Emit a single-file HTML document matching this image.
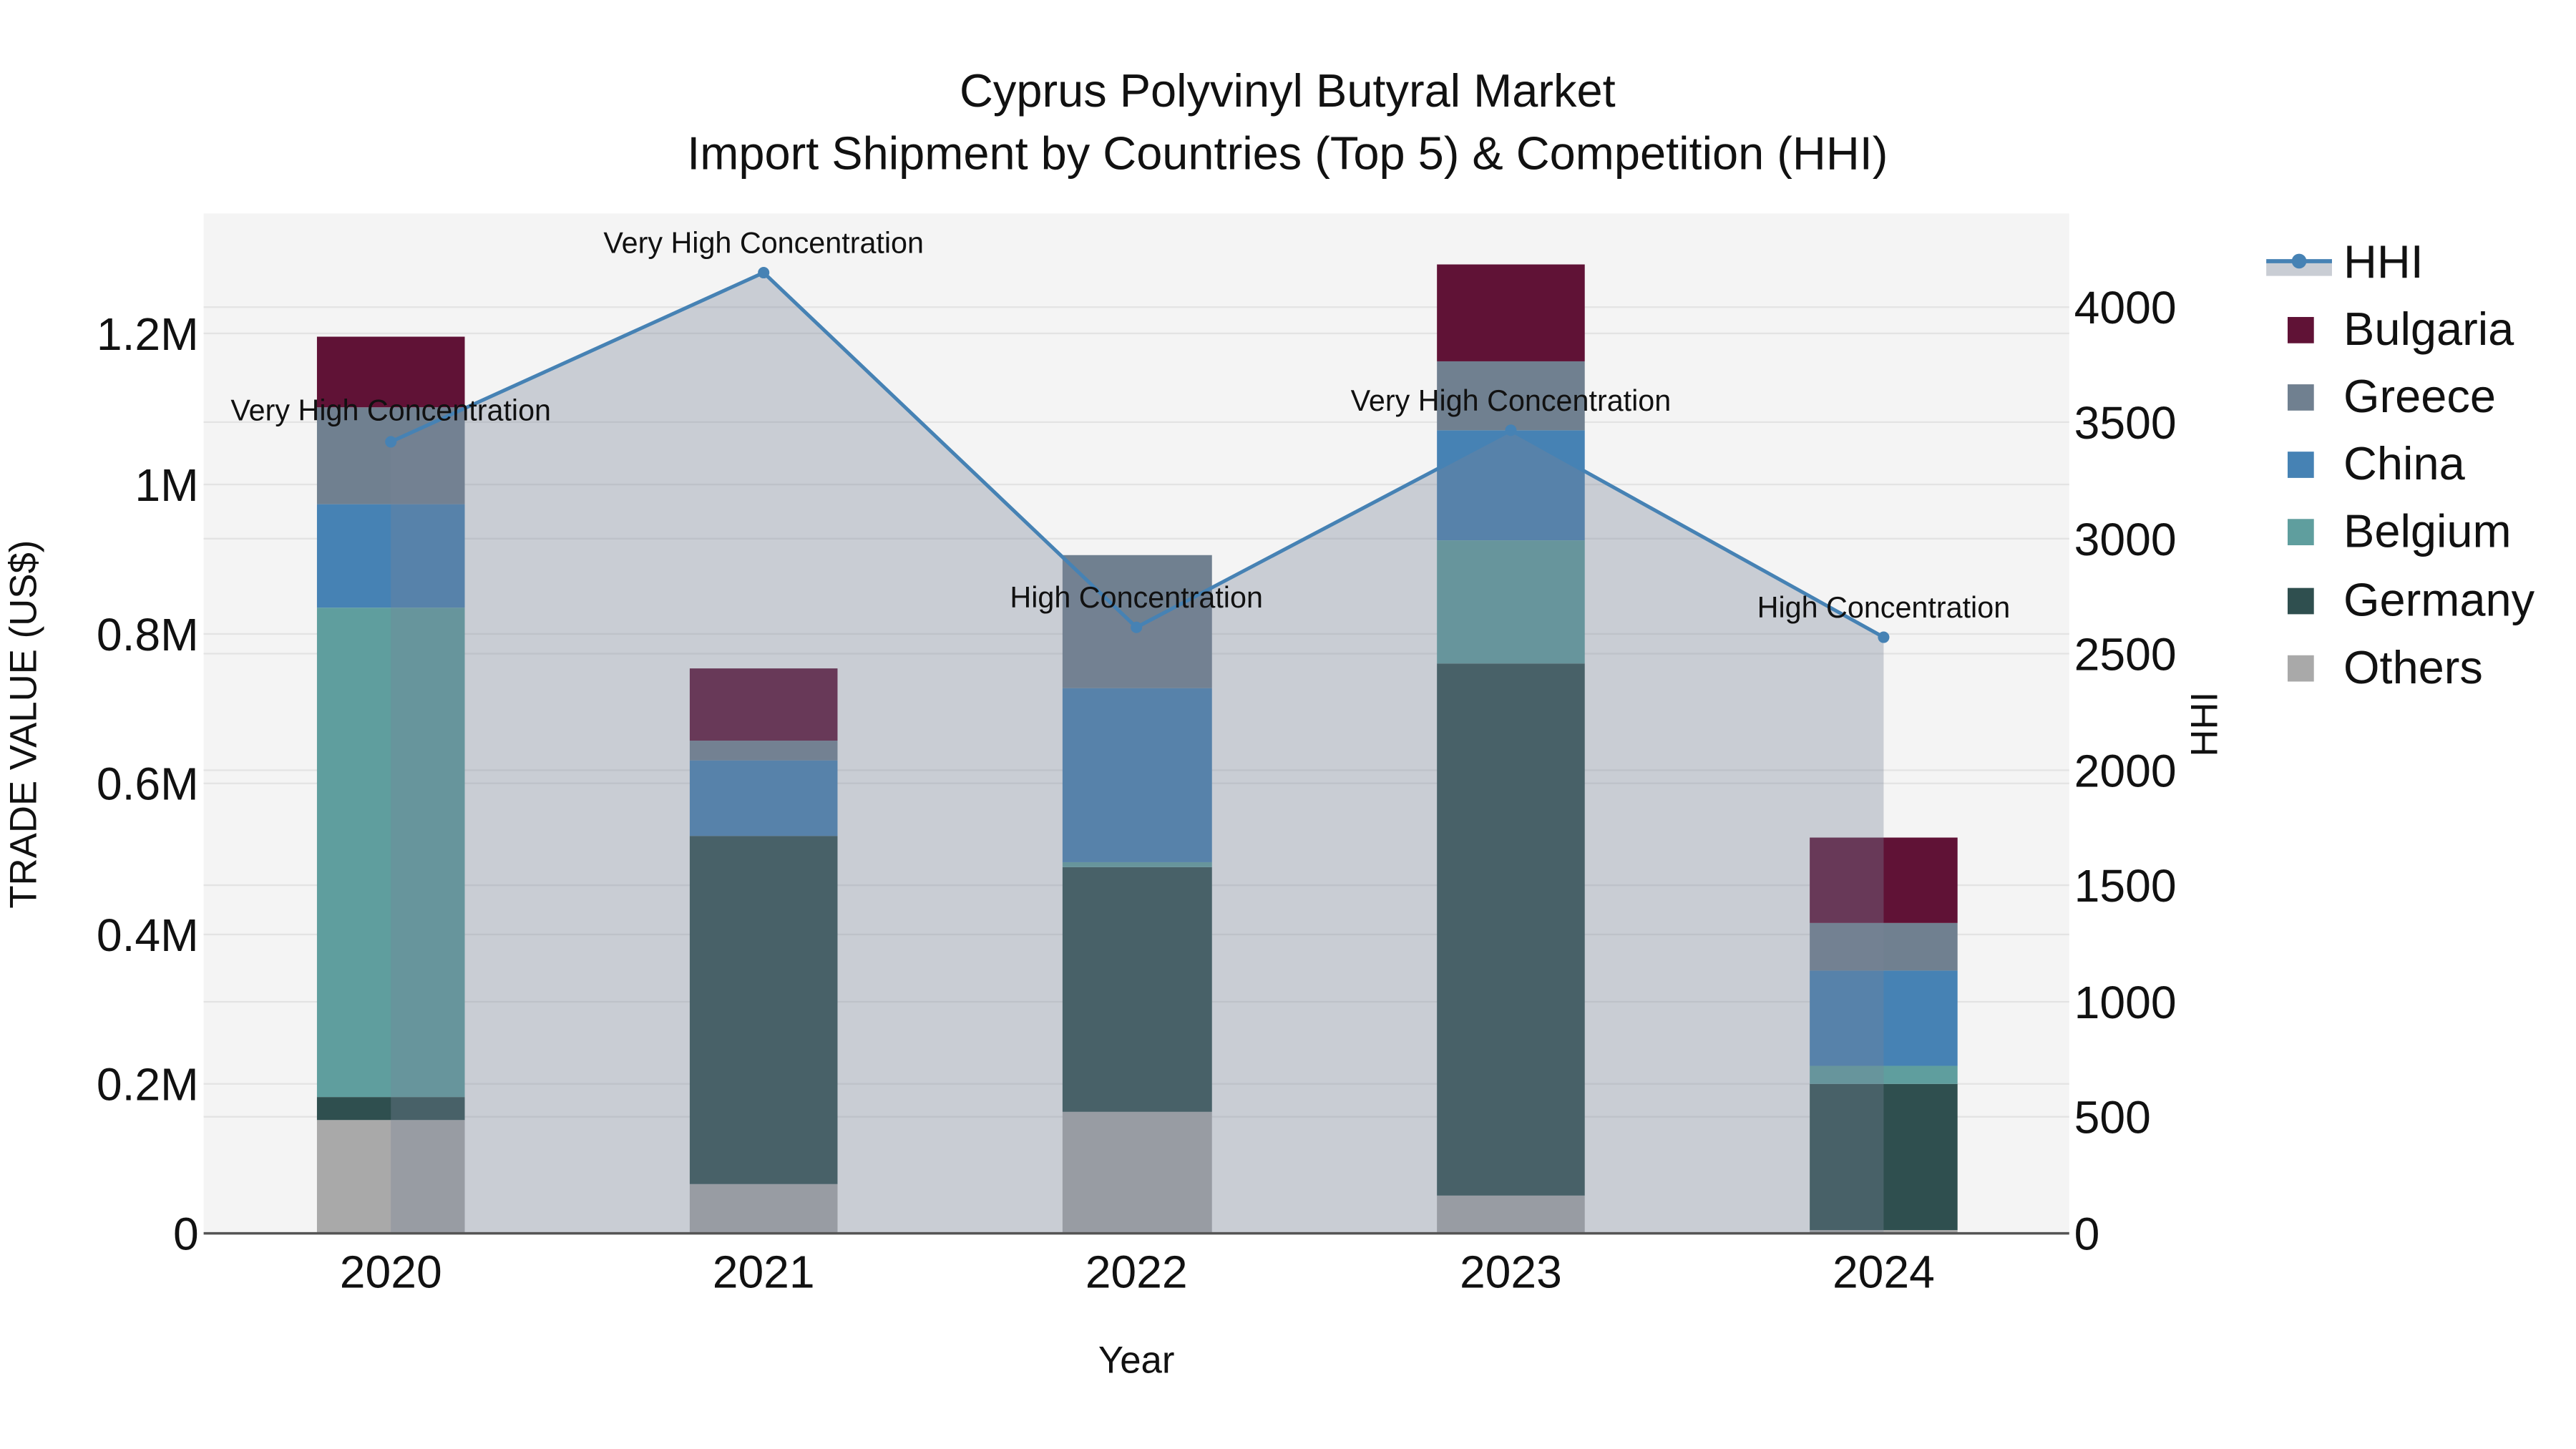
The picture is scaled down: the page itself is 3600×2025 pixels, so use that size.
<!DOCTYPE html>
<html><head><meta charset="utf-8"><style>html,body{margin:0;padding:0;background:#fff}svg{display:block}text{font-family:"Liberation Sans",sans-serif;fill:#111}</style></head><body>
<svg width="3600" height="2025" viewBox="0 0 1568.6 882.3" xmlns="http://www.w3.org/2000/svg">
<rect x="0" y="0" width="1570" height="884" fill="#fff"/>
<rect x="124" y="130" width="1136" height="621" fill="#f4f4f4"/>
<g stroke="#e3e3e3" stroke-width="1">
<line x1="124" x2="1260" y1="660" y2="660"/><line x1="124" x2="1260" y1="569" y2="569"/><line x1="124" x2="1260" y1="477" y2="477"/><line x1="124" x2="1260" y1="386" y2="386"/><line x1="124" x2="1260" y1="295" y2="295"/><line x1="124" x2="1260" y1="203" y2="203"/>
<line x1="124" x2="1260" y1="680" y2="680"/><line x1="124" x2="1260" y1="610" y2="610"/><line x1="124" x2="1260" y1="539" y2="539"/><line x1="124" x2="1260" y1="469" y2="469"/><line x1="124" x2="1260" y1="398" y2="398"/><line x1="124" x2="1260" y1="328" y2="328"/><line x1="124" x2="1260" y1="257" y2="257"/><line x1="124" x2="1260" y1="187" y2="187"/>
</g>
<g>
<rect x="193" y="682" width="90" height="69" fill="#a9a9a9"/><rect x="193" y="668" width="90" height="14" fill="#2f4f4f"/><rect x="193" y="370" width="90" height="298" fill="#5f9e9e"/><rect x="193" y="307" width="90" height="63" fill="#4682b4"/><rect x="193" y="248" width="90" height="59" fill="#708090"/><rect x="193" y="205" width="90" height="43" fill="#601236"/>
<rect x="420" y="721" width="90" height="30" fill="#a9a9a9"/><rect x="420" y="509" width="90" height="212" fill="#2f4f4f"/><rect x="420" y="463" width="90" height="46" fill="#4682b4"/><rect x="420" y="451" width="90" height="12" fill="#708090"/><rect x="420" y="407" width="90" height="44" fill="#601236"/>
<rect x="647" y="677" width="91" height="74" fill="#a9a9a9"/><rect x="647" y="528" width="91" height="149" fill="#2f4f4f"/><rect x="647" y="525" width="91" height="3" fill="#5f9e9e"/><rect x="647" y="419" width="91" height="106" fill="#4682b4"/><rect x="647" y="338" width="91" height="81" fill="#708090"/>
<rect x="875" y="728" width="90" height="23" fill="#a9a9a9"/><rect x="875" y="404" width="90" height="324" fill="#2f4f4f"/><rect x="875" y="329" width="90" height="75" fill="#5f9e9e"/><rect x="875" y="262" width="90" height="67" fill="#4682b4"/><rect x="875" y="220" width="90" height="42" fill="#708090"/><rect x="875" y="161" width="90" height="59" fill="#601236"/>
<rect x="1102" y="749" width="90" height="2" fill="#a9a9a9"/><rect x="1102" y="660" width="90" height="89" fill="#2f4f4f"/><rect x="1102" y="649" width="90" height="11" fill="#5f9e9e"/><rect x="1102" y="591" width="90" height="58" fill="#4682b4"/><rect x="1102" y="562" width="90" height="29" fill="#708090"/><rect x="1102" y="510" width="90" height="52" fill="#601236"/>
</g>
<polygon points="238,751 238,269 465,166 692,382 920,262 1147,388 1147,751" fill="rgba(121,133,153,0.35)"/>
<polyline points="238,269 465,166 692,382 920,262 1147,388" fill="none" stroke="#4682b4" stroke-width="2.2"/>
<g fill="#4682b4"><circle cx="238" cy="269" r="3.5"/><circle cx="465" cy="166" r="3.5"/><circle cx="692" cy="382" r="3.5"/><circle cx="920" cy="262" r="3.5"/><circle cx="1147" cy="388" r="3.5"/></g>
<line x1="124" x2="1260" y1="751" y2="751" stroke="#555" stroke-width="1.5"/>
<g font-size="18" text-anchor="middle">
<text x="238" y="256">Very High Concentration</text>
<text x="465" y="154">Very High Concentration</text>
<text x="692" y="370">High Concentration</text>
<text x="920" y="250">Very High Concentration</text>
<text x="1147" y="376">High Concentration</text>
</g>
<g font-size="28.3" text-anchor="middle">
<text x="784" y="65">Cyprus Polyvinyl Butyral Market</text>
<text x="784" y="103">Import Shipment by Countries (Top 5) &amp; Competition (HHI)</text>
</g>
<g font-size="28" text-anchor="end">
<text x="121" y="761">0</text><text x="121" y="670">0.2M</text><text x="121" y="579">0.4M</text><text x="121" y="487">0.6M</text><text x="121" y="396">0.8M</text><text x="121" y="305">1M</text><text x="121" y="213">1.2M</text>
</g>
<g font-size="28" text-anchor="start">
<text x="1263" y="761">0</text><text x="1263" y="690">500</text><text x="1263" y="620">1000</text><text x="1263" y="549">1500</text><text x="1263" y="479">2000</text><text x="1263" y="408">2500</text><text x="1263" y="338">3000</text><text x="1263" y="267">3500</text><text x="1263" y="197">4000</text>
</g>
<g font-size="28" text-anchor="middle">
<text x="238" y="784">2020</text><text x="465" y="784">2021</text><text x="692" y="784">2022</text><text x="920" y="784">2023</text><text x="1147" y="784">2024</text>
</g>
<text x="692" y="836" font-size="23" text-anchor="middle">Year</text>
<text transform="translate(22,441) rotate(-90)" font-size="23" text-anchor="middle">TRADE VALUE (US$)</text>
<text transform="translate(1350,441) rotate(-90)" font-size="23" text-anchor="middle">HHI</text>
<rect x="1380" y="159" width="40" height="9" fill="#c9cdd4"/>
<line x1="1380" x2="1420" y1="159" y2="159" stroke="#4682b4" stroke-width="2.5"/>
<circle cx="1400" cy="159" r="4.5" fill="#4682b4"/>
<g font-size="28.3">
<text x="1427" y="169">HHI</text>
<rect x="1393" y="193" width="16" height="16" fill="#601236"/><text x="1427" y="210">Bulgaria</text>
<rect x="1393" y="234" width="16" height="16" fill="#708090"/><text x="1427" y="251">Greece</text>
<rect x="1393" y="275" width="16" height="16" fill="#4682b4"/><text x="1427" y="292">China</text>
<rect x="1393" y="316" width="16" height="16" fill="#5f9e9e"/><text x="1427" y="333">Belgium</text>
<rect x="1393" y="358" width="16" height="16" fill="#2f4f4f"/><text x="1427" y="375">Germany</text>
<rect x="1393" y="399" width="16" height="16" fill="#a9a9a9"/><text x="1427" y="416">Others</text>
</g>
</svg>
</body></html>
